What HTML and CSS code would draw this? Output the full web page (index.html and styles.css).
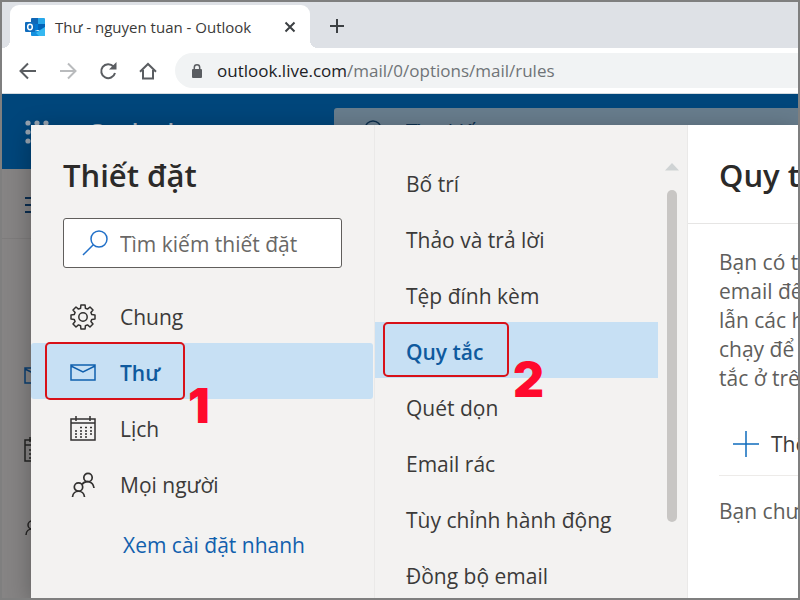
FILE: index.html
```html
<!DOCTYPE html>
<html lang="vi">
<head>
  <meta charset="UTF-8" />
  <meta name="viewport" content="width=device-width, initial-scale=1.0" />
  <title>Thư - nguyen tuan - Outlook</title>
  <link rel="stylesheet" href="styles.css">
</head>
<body>
  <header class="browser">
    <div class="tab-strip">
      <div class="tab">
        <svg class="tab-icon" width="20" height="18" viewBox="0 0 20 18">
          <path fill="#1066b5" d="M6 1a1 1 0 0 1 1-1h6v6H6z" />
          <path fill="#28a8ea" d="M13 0h6a1 1 0 0 1 1 1v5h-7z" />
          <path fill="#0078d4" d="M6 6h7v6H6z" />
          <path fill="#0364b8" d="M13 6h7v6h-7z" />
          <path fill="#1490df" d="M10 12l3 1 7-4v8a1 1 0 0 1-1 1H7a1 1 0 0 1-1-1v-5z" />
          <path fill="#35b8f1" d="M20 9v8a1 1 0 0 1-1 1h-5l-3-3z" />
          <rect fill="#0f6cbd" y="4" width="10" height="10" rx="1" />
          <ellipse cx="5" cy="9" rx="2.3" ry="2.7" fill="none" stroke="#fff" stroke-width="1.5" />
        </svg>
        <span class="tab-title">Thư - nguyen tuan - Outlook</span>
        <button class="plain" aria-label="Đóng">
          <svg width="12" height="12" viewBox="0 0 12 12"><path d="M1.500 1.500l9 9m0-9l-9 9" stroke="#3c4043" stroke-width="2" /></svg>
        </button>
      </div>
      <button class="plain new-tab" aria-label="Thẻ mới">
        <svg width="16" height="16" viewBox="0 0 16 16"><path d="M8 1v14M1 8h14" stroke="#3c4043" stroke-width="2" /></svg>
      </button>
    </div>
    <div class="toolbar">
      <button class="plain" aria-label="Quay lại">
        <svg width="18" height="18" viewBox="0 0 18 18" fill="none" stroke="#5a5d61" stroke-width="2"><path d="M17 9H2M9 1.500L1.500 9 9 16.500" /></svg>
      </button>
      <button class="plain" aria-label="Tiến">
        <svg width="18" height="18" viewBox="0 0 18 18" fill="none" stroke="#b9bbbd" stroke-width="2"><path d="M1 9h15M9 1.500L16.500 9 9 16.500" /></svg>
      </button>
      <button class="plain" aria-label="Tải lại">
        <svg width="18" height="18" viewBox="0 0 18 18"><path d="M14.500 4.500A7 7 0 1 0 16 11" fill="none" stroke="#5a5d61" stroke-width="2" /><path d="M17.500 0v7.500H10z" fill="#5a5d61" /></svg>
      </button>
      <button class="plain" aria-label="Trang chủ">
        <svg width="18" height="18" viewBox="0 0 18 18" fill="none" stroke="#5a5d61" stroke-width="2"><path d="M1 9.700L9 2l8 7.700M4 8v8.500h10V8" /></svg>
      </button>
      <div class="address">
        <svg width="12" height="14" viewBox="0 0 12 14"><rect x="1" y="5" width="10" height="9" rx="1" fill="#5a5d61" /><path d="M3.300 6V3.500a2.700 2.700 0 0 1 5.400 0V6" fill="none" stroke="#5a5d61" stroke-width="1.500" /></svg>
        <div class="url" role="textbox" contenteditable="true" spellcheck="false" aria-label="Địa chỉ"><span class="host">outlook.live.com</span>/mail/0/options/mail/rules</div>
      </div>
    </div>
  </header>

  <main class="app">
    <div class="app-header">
      <svg class="waffle" width="24" height="24" viewBox="0 0 24 24" fill="#98a4b0">
        <circle cx="3" cy="3" r="2.600" /><circle cx="12" cy="3" r="2.600" /><circle cx="21" cy="3" r="2.600" />
        <circle cx="3" cy="12" r="2.600" /><circle cx="12" cy="12" r="2.600" /><circle cx="21" cy="12" r="2.600" />
        <circle cx="3" cy="21" r="2.600" /><circle cx="12" cy="21" r="2.600" /><circle cx="21" cy="21" r="2.600" />
      </svg>
      <span class="brand">Outlook</span>
      <label class="app-search">
        <svg width="24" height="24" viewBox="0 0 24 24" fill="none" stroke="#0c2f4d" stroke-width="1.500"><circle cx="15" cy="9" r="8" /><path d="M9 15l-7 7" /></svg>
        <input type="search" placeholder="Tìm kiếm" aria-label="Tìm kiếm">
      </label>
    </div>
    <div class="app-rail">
      <div class="rail-menu">
        <svg width="20" height="18" viewBox="0 0 20 18"><path d="M0 2h20M0 9h20M0 16h20" stroke="#0b2e50" stroke-width="2" /></svg>
      </div>
      <div class="rail-icons">
        <svg width="26" height="26" viewBox="0 0 26 26" fill="none" stroke="#0b3f72" stroke-width="1.500"><path d="M1 5h24v15H1zM1 6l12 6 12-6" /></svg>
        <svg width="26" height="26" viewBox="0 0 26 26" fill="none" stroke="#252423" stroke-width="1.500"><path d="M1 3h24v21H1zM1 8h24M6 0v5" /><path d="M5 13h16M5 17h16M5 21h16" stroke-dasharray="2 3" /></svg>
        <svg width="26" height="26" viewBox="0 0 26 26" fill="none" stroke="#252423" stroke-width="1.500"><circle cx="8" cy="14" r="4" /><path d="M2 24c0-8 12-8 12 0" /></svg>
      </div>
    </div>

    <section class="settings" role="dialog" aria-label="Thiết đặt">
      <nav class="categories">
        <h1>Thiết đặt</h1>
        <label class="search">
          <svg width="26" height="26" viewBox="0 0 26 26" fill="none" stroke="#2170c8" stroke-width="1.500"><circle cx="17" cy="9" r="8" /><path d="M11.300 14.700L1 25" /></svg>
          <input type="search" placeholder="Tìm kiếm thiết đặt" aria-label="Tìm kiếm thiết đặt">
        </label>
        <ul>
          <li><a href="#chung">
            <svg width="26" height="26" viewBox="0 0 26 26" fill="none" stroke="#323130" stroke-width="1.500" stroke-linejoin="round"><circle cx="13" cy="13" r="4.200" /><path d="M10.600 4.200L10.900 1h4.200l.3 3.200 2.100.9 2.500-2.100 3 3-2.100 2.500.9 2.100 3.200.3v4.200l-3.200.3-.9 2.100 2.100 2.500-3 3-2.500-2.100-2.100.9-.3 3.200h-4.200l-.3-3.200-2.100-.9L6 23l-3-3 2.100-2.500-.9-2.100L1 15.100v-4.200l3.200-.3.900-2.100L3 6l3-3 2.500 2.100z" /></svg>
            Chung</a></li>
          <li><a class="selected" href="#thu">
            <svg width="26" height="26" viewBox="0 0 26 26" fill="none" stroke="#1160ad" stroke-width="1.500"><path d="M1 5h24v15H1zM1 6l12 6 12-6" /></svg>
            Thư</a><span class="mark mark-one"></span><span class="step step-one">1</span></li>
          <li><a href="#lich">
            <svg width="26" height="26" viewBox="0 0 26 26" fill="none" stroke="#323130" stroke-width="1.500"><path d="M1 3h24v21H1zM1 7h24M6 0v5M20 0v5" /><path d="M10 11.500h12M5 15h17M5 18h17M5 21h12" stroke-dasharray="2 3" /></svg>
            Lịch</a></li>
          <li><a href="#nguoi">
            <svg width="26" height="26" viewBox="0 0 26 26" fill="none" stroke="#323130" stroke-width="1.700"><circle cx="18" cy="5.500" r="4.200" /><circle cx="8.500" cy="15" r="4.200" /><path d="M2.500 25c.7-7.700 11.300-7.700 12 0M12 12.500c3-4.500 11-4 12 3.500" /></svg>
            Mọi người</a></li>
        </ul>
        <a class="quick" href="#nhanh">Xem cài đặt nhanh</a>
      </nav>

      <nav class="pages">
        <ul>
          <li><a href="#botri">Bố trí</a></li>
          <li><a href="#thao">Thảo và trả lời</a></li>
          <li><a href="#tep">Tệp đính kèm</a></li>
          <li><a class="selected" href="#quytac">Quy tắc</a><span class="mark mark-two"></span><span class="step step-two">2</span></li>
          <li><a href="#quet">Quét dọn</a></li>
          <li><a href="#rac">Email rác</a></li>
          <li><a href="#hanhdong">Tùy chỉnh hành động</a></li>
          <li><a href="#dongbo">Đồng bộ email</a></li>
        </ul>
        <div class="scrollbar">
          <svg width="14" height="8" viewBox="0 0 14 8"><path d="M0 7.500L7 0l7 7.500z" fill="#cfd3d4" /></svg>
          <div class="thumb"></div>
        </div>
      </nav>

      <section class="rules">
        <h2>Quy tắc</h2>
        <div class="rules-body">
          <p>Bạn có thể<br>email đến.<br>lẫn các hành<br>chạy để<br>tắc ở trên</p>
          <button class="plain add">
            <svg width="26" height="26" viewBox="0 0 26 26"><path d="M13 0v26M0 13h26" stroke="#0f6cbd" stroke-width="1.500" /></svg>
            Thêm
          </button>
          <p>Bạn chưa</p>
        </div>
      </section>
    </section>
  </main>
</body>
</html>
```

FILE: styles.css
```css
* {
  box-sizing: border-box;
}
body {
  margin: 0;
  height: 100vh;
  display: flex;
  flex-direction: column;
  overflow: hidden;
  border: 2px solid #7f7f7f;
  background-color: #ffffff;
  color: #3b3a39;
  font-family: "Open Sans", "Noto Sans", sans-serif;
  font-size: 21px;
}
h1, h2, p, ul {
  margin: 0;
  padding: 0;
}
ul {
  list-style: none;
}
a {
  color: inherit;
  text-decoration: none;
}
svg {
  display: block;
  flex: none;
}
input {
  flex: 1;
  min-width: 0;
  padding: 0;
  border: none;
  outline: none;
  background: none;
  font: inherit;
}
.plain {
  padding: 0;
  border: none;
  background: none;
  color: inherit;
  font: inherit;
}

/* browser */
.browser {
  flex: none;
  border-bottom: 1px solid #d5dbe0;
}
.tab-strip {
  display: flex;
  align-items: flex-end;
  gap: 19px;
  height: 46px;
  padding-left: 8px;
  background-color: #dee1e6;
}
.tab {
  position: relative;
  display: flex;
  align-items: center;
  gap: 10px;
  width: 300px;
  height: 43px;
  padding: 0 14px 0 15px;
  border-radius: 9px 9px 0 0;
  background-color: #ffffff;
  font-size: 15px;
}
.tab::before,
.tab::after {
  content: "";
  position: absolute;
  bottom: 0;
  width: 8px;
  height: 8px;
}
.tab::before {
  left: -8px;
  background: radial-gradient(circle at 0 0, #dee1e6 8px, #ffffff 8px);
}
.tab::after {
  right: -8px;
  background: radial-gradient(circle at 100% 0, #dee1e6 8px, #ffffff 8px);
}
.tab-title {
  flex: 1;
  white-space: nowrap;
}
.new-tab {
  padding-bottom: 14px;
}
.toolbar {
  display: flex;
  align-items: center;
  gap: 22px;
  height: 45px;
  padding-left: 17px;
}
.address {
  flex: 1;
  display: flex;
  align-items: center;
  gap: 14px;
  height: 35px;
  margin-left: -4px;
  padding-left: 16px;
  border-radius: 18px 0 0 18px;
  background-color: #f1f3f4;
  color: #6f7377;
  font-size: 17px;
}
.url {
  white-space: nowrap;
}
.host {
  color: #202124;
}

/* dimmed mailbox */
.app {
  position: relative;
  flex: 1;
  overflow: hidden;
  background-color: #868484;
}
.app-header {
  display: flex;
  align-items: center;
  height: 75px;
  padding-left: 23px;
  background-color: #00467b;
}
.brand {
  width: 246px;
  margin-left: 39px;
  color: #a9b4c0;
  font-size: 24px;
  font-weight: 600;
}
.app-search {
  flex: 1;
  display: flex;
  align-items: center;
  gap: 24px;
  height: 48px;
  padding-left: 24px;
  border-radius: 3px 0 0 3px;
  background-color: #687d8d;
}
.app-search input::placeholder {
  color: #0c2f4d;
}
.rail-menu {
  height: 70px;
  padding: 27px 0 0 23px;
  border-bottom: 1px solid #7e7c7c;
}
.rail-icons {
  display: flex;
  flex-direction: column;
  gap: 48px;
  padding: 124px 0 0 22px;
}

/* settings dialog */
.settings {
  position: absolute;
  inset: 31px 0 0 29px;
  display: grid;
  grid-template-columns: 344px 313px 1fr;
  overflow: hidden;
  background-color: #f3f2f1;
}
.app::after {
  content: "";
  position: absolute;
  inset: 31px 0 0 29px;
  box-shadow: 0 6px 24px rgba(0, 0, 0, 0.3);
  pointer-events: none;
}
h1, h2 {
  color: #2b2a29;
  font-size: 31px;
  font-weight: 600;
  line-height: 44px;
}
.categories {
  padding-top: 28px;
  border-right: 1px solid #eae9e8;
}
.categories h1 {
  padding-left: 32px;
}
.search {
  display: flex;
  align-items: center;
  gap: 12px;
  height: 50px;
  margin: 21px 32px 19px 32px;
  padding-left: 18px;
  border: 1px solid #605e5c;
  border-radius: 3px;
  background-color: #ffffff;
}
.search input {
  padding-top: 2px;
}
.search input::placeholder {
  color: #6a6866;
}
li {
  position: relative;
}
li a {
  display: flex;
  align-items: center;
  height: 56px;
  padding-top: 4px;
}
li .selected {
  background-color: #c7e0f4;
  color: #0f5a9e;
  font-weight: 600;
}
.categories li a {
  gap: 24px;
  margin-right: 1px;
  padding-left: 39px;
  border-radius: 3px;
}
.quick {
  display: block;
  padding: 20px 0 0 92px;
  line-height: 28px;
  color: #1160ad;
}
.pages {
  display: flex;
  gap: 7px;
  padding-top: 29px;
  border-right: 1px solid #eae9e8;
}
.pages ul {
  width: 283px;
}
.pages li a {
  padding-left: 31px;
}
.scrollbar {
  display: flex;
  flex-direction: column;
  align-items: center;
  gap: 19px;
  padding-top: 9px;
}
.thumb {
  width: 10px;
  height: 332px;
  border-radius: 5px;
  background-color: #c8c6c4;
}
.rules {
  overflow: hidden;
  background-color: #ffffff;
  white-space: nowrap;
}
.rules h2 {
  height: 99px;
  padding: 28px 0 0 31px;
  border-bottom: 1px solid #e6e5e4;
}
.rules-body {
  padding: 24px 0 0 31px;
}
.rules-body p {
  color: #605e5c;
  line-height: 29px;
}
.add {
  display: flex;
  align-items: center;
  gap: 12px;
  width: 100%;
  height: 65px;
  margin: 18px 0 21px;
  padding: 2px 0 0 14px;
  border-bottom: 1px solid #edebe9;
}

/* numbered steps */
.mark {
  position: absolute;
  border: 2px solid #d81118;
  border-radius: 5px;
  pointer-events: none;
}
.mark-one {
  inset: -1px 189px -1px 14px;
}
.mark-two {
  inset: 0 149px 1px 8px;
}
.step {
  position: absolute;
  z-index: 1;
  color: #ff0a2d;
  font-family: Inter, "Liberation Sans", sans-serif;
  font-size: 48px;
  font-weight: 900;
  line-height: 48px;
}
.step-one {
  left: 157px;
  top: 39px;
}
.step-two {
  left: 138px;
  top: 34px;
}
```
